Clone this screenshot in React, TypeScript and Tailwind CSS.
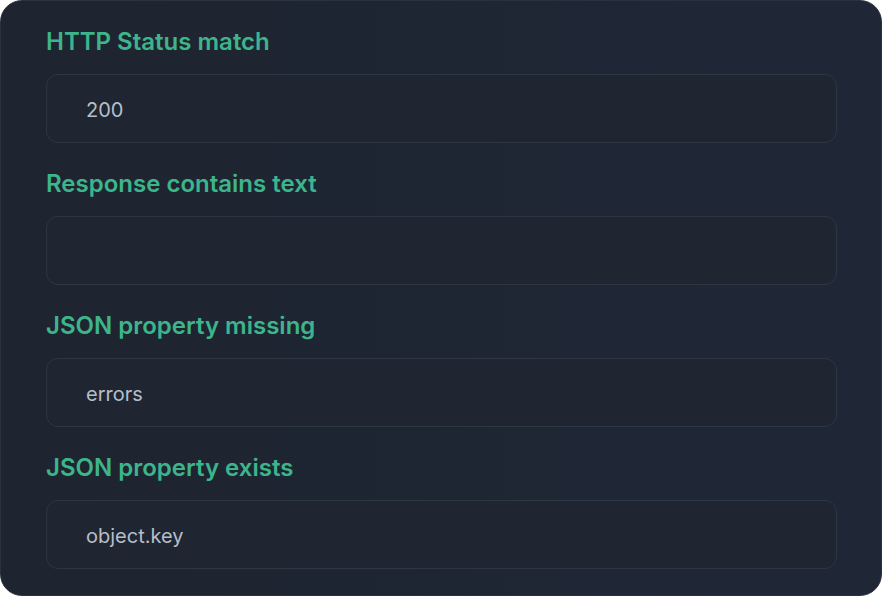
const fields = [
  { label: 'HTTP Status match', value: '200' },
  { label: 'Response contains text', value: '' },
  { label: 'JSON property missing', value: 'errors' },
  { label: 'JSON property exists', value: 'object.key' },
];

export default function App() {
  return (
    <div className="h-[596px] w-[882px] bg-white font-['Inter',sans-serif]">
      <div className="flex h-full flex-col gap-[27px] rounded-[22px] border border-[#2a323e] bg-gradient-to-r from-[#1e2530] to-[#1f2636] pl-[45px] pr-[44px] pt-[27px]">
        {fields.map((f) => (
          <div key={f.label} className="flex flex-col">
            <label className="mb-[18px] h-[28px] text-[24px] font-semibold leading-[28px] text-[#3db58c]">
              {f.label}
            </label>
            <div className="flex h-[69px] items-center rounded-[12px] border border-[#2d3643] bg-[#1f2632] pl-[39px] pt-[2px] text-[20px] text-[#b6bec9]">
              {f.value}
            </div>
          </div>
        ))}
      </div>
    </div>
  );
}
